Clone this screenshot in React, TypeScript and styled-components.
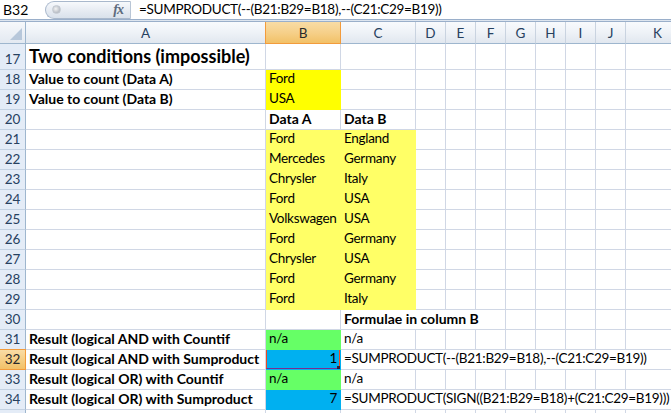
import React from "react";
import styled, { createGlobalStyle, css } from "styled-components";

const GlobalStyle = createGlobalStyle`
  html, body {
    margin: 0;
    padding: 0;
    background: #ffffff;
  }
  body {
    font-family: Lato, "Liberation Sans", sans-serif;
  }
`;

const COLS = ["A", "B", "C", "D", "E", "F", "G", "H", "I", "J", "K"];
const WIDTHS = [240, 75, 75, 30, 30, 30, 30, 30, 30, 30, 64];

const GRID = "#d0d7e5";
const YELLOW = "#ffff00";
const PALE = "#ffff66";
const GREEN = "#66ff66";
const BLUE = "#00b0f0";

type CellData = {
  t: string;
  b?: boolean;
  fill?: string;
  right?: boolean;
  span?: number;
  big?: boolean;
  selected?: boolean;
};

const pairs: [string, string][] = [
  ["Ford", "England"],
  ["Mercedes", "Germany"],
  ["Chrysler", "Italy"],
  ["Ford", "USA"],
  ["Volkswagen", "USA"],
  ["Ford", "Germany"],
  ["Chrysler", "USA"],
  ["Ford", "Germany"],
  ["Ford", "Italy"],
];

const sheet: Record<number, Record<string, CellData>> = {
  17: { A: { t: "Two conditions (impossible)", b: true, big: true } },
  18: {
    A: { t: "Value to count (Data A)", b: true },
    B: { t: "Ford", fill: YELLOW },
  },
  19: {
    A: { t: "Value to count (Data B)", b: true },
    B: { t: "USA", fill: YELLOW },
  },
  20: { B: { t: "Data A", b: true }, C: { t: "Data B", b: true } },
  30: { C: { t: "Formulae in column B", b: true, span: 4 } },
  31: {
    A: { t: "Result (logical AND with Countif", b: true },
    B: { t: "n/a", fill: GREEN },
    C: { t: "n/a" },
  },
  32: {
    A: { t: "Result (logical AND with Sumproduct", b: true },
    B: { t: "1", fill: BLUE, right: true, selected: true },
    C: { t: "=SUMPRODUCT(--(B21:B29=B18),--(C21:C29=B19))", span: 9 },
  },
  33: {
    A: { t: "Result (logical OR) with Countif", b: true },
    B: { t: "n/a", fill: GREEN },
    C: { t: "n/a" },
  },
  34: {
    A: { t: "Result (logical OR) with Sumproduct", b: true },
    B: { t: "7", fill: BLUE, right: true },
    C: { t: "=SUMPRODUCT(SIGN((B21:B29=B18)+(C21:C29=B19)))", span: 9 },
  },
};
pairs.forEach(([a, b], i) => {
  sheet[21 + i] = { B: { t: a, fill: PALE }, C: { t: b, fill: PALE } };
});

// row 35 only peeks in at the bottom edge, so its number stays hidden
const ROWS = Array.from({ length: 19 }, (_, i) => 17 + i);
const LAST_VISIBLE = 34;

const Page = styled.div`
  width: 671px;
  height: 413px;
  overflow: hidden;
  background: #ffffff;
  color: #000000;
`;

const FormulaBar = styled.div`
  display: flex;
  align-items: center;
  height: 19px;
  background: #ffffff;
  font-size: 13.5px;
  letter-spacing: -0.3px;
`;

const NameBox = styled.div`
  width: 42px;
  padding-left: 3px;
  box-sizing: border-box;
  line-height: 19px;
  letter-spacing: 0;
  font-size: 14px;
`;

const FxPill = styled.div`
  display: flex;
  align-items: center;
  justify-content: space-between;
  box-sizing: border-box;
  width: 86px;
  height: 18px;
  margin-left: 3px;
  padding: 0 7px 0 6px;
  border: 1px solid #a9b8cc;
  border-right-color: #b9c6d6;
  border-radius: 9px 0 0 9px;
  background: linear-gradient(#f7f9fc, #e6ebf2 55%, #d9e1eb);
`;

const Knob = styled.span`
  width: 7px;
  height: 7px;
  border-radius: 50%;
  background: radial-gradient(circle at 40% 40%, #f4f4f4, #b7bcc4 70%);
  border: 1px solid #c3c9d1;
`;

const Fx = styled.span`
  font-family: "Liberation Serif", serif;
  font-style: italic;
  font-weight: bold;
  font-size: 14px;
  color: #5d6b7e;
  letter-spacing: -1px;
`;

const FormulaText = styled.div`
  padding-left: 8px;
  white-space: nowrap;
  line-height: 19px;
`;

const BarRule = styled.div`
  height: 1px;
  border-top: 1px solid #9aafca;
  border-bottom: 1px solid #9aafca;
  background: #dde5ef;
`;

const Sheet = styled.div`
  display: grid;
  grid-template-columns: 26px ${WIDTHS.map((w) => `${w}px`).join(" ")};
  grid-template-rows: 22px 26px repeat(18, 20px);
  font-size: 13.5px;
`;

const Corner = styled.div`
  position: relative;
  box-sizing: border-box;
  border-right: 1px solid #9eb6ce;
  border-bottom: 1px solid #9eb6ce;
  background: linear-gradient(#f6f8fb, #e3e9f1);
  &::after {
    content: "";
    position: absolute;
    right: 3px;
    bottom: 3px;
    border-style: solid;
    border-width: 0 0 12px 12px;
    border-color: transparent transparent #b7c7da transparent;
  }
`;

const ColHeader = styled.div<{ $active?: boolean }>`
  box-sizing: border-box;
  display: flex;
  align-items: center;
  justify-content: center;
  color: #27415f;
  font-size: 13.5px;
  border-right: 1px solid #c9d3e0;
  border-bottom: 1px solid #9eb6ce;
  background: linear-gradient(#f8fafd, #eef2f7 50%, #e1e7ef);
  ${({ $active }) =>
    $active &&
    css`
      color: #2a2a2a;
      background: linear-gradient(#f9dca5, #f6d08a 50%, #f2c167);
      border-left: 1px solid #f29b3c;
      border-right: 1px solid #f29b3c;
      border-bottom: 1px solid #f29b3c;
      margin-left: -1px;
    `}
`;

const RowHeader = styled.div<{ $active?: boolean }>`
  box-sizing: border-box;
  display: flex;
  align-items: flex-end;
  justify-content: center;
  padding-bottom: 1px;
  color: #27415f;
  font-size: 13.5px;
  line-height: 18px;
  background: #e4ecf7;
  border-right: 1px solid #9eb6ce;
  border-bottom: 1px solid #c3d2e3;
  ${({ $active }) =>
    $active &&
    css`
      color: #2a2a2a;
      background: linear-gradient(#f9dca5, #f2c167);
      border-right-color: #f29b3c;
      border-bottom-color: #f29b3c;
      border-top: 1px solid #f29b3c;
      margin-top: -1px;
    `}
`;

const Cell = styled.div<{
  $fill?: string;
  $bold?: boolean;
  $right?: boolean;
  $big?: boolean;
  $span?: number;
}>`
  position: relative;
  box-sizing: border-box;
  display: flex;
  align-items: flex-end;
  justify-content: ${({ $right }) => ($right ? "flex-end" : "flex-start")};
  padding: 0 3px 2px 3px;
  overflow: hidden;
  white-space: nowrap;
  grid-column: auto / span ${({ $span }) => $span || 1};
  font-weight: ${({ $bold }) => ($bold ? 700 : 400)};
  font-size: ${({ $big, $bold }) => ($big ? "18px" : $bold ? "14px" : "inherit")};
  letter-spacing: ${({ $bold }) => ($bold ? "0" : "-0.3px")};
  line-height: ${({ $big }) => ($big ? "22px" : "17px")};
  background: ${({ $fill }) => $fill || "#ffffff"};
  border-right: 1px solid ${({ $fill }) => $fill || GRID};
  border-bottom: 1px solid ${({ $fill }) => $fill || GRID};
  ${({ $span }) =>
    $span &&
    $span > 1 &&
    css`
      overflow: visible;
    `}
`;

const Selection = styled.div`
  position: absolute;
  top: -2px;
  left: -1px;
  right: -1px;
  bottom: -1px;
  border: 2px solid #ee4a22;
  border-bottom-color: #7a2d8f;
  box-shadow: 0 0 0 1px #3b2240;
  pointer-events: none;
`;

const FillHandle = styled.span`
  position: absolute;
  right: -4px;
  bottom: -4px;
  width: 5px;
  height: 5px;
  background: #2c1d3a;
  border: 1px solid #ffffff;
  border-top: none;
  border-left: none;
`;

const SheetRow: React.FC<{ r: number }> = ({ r }) => {
  const data = sheet[r] || {};
  const out: React.ReactNode[] = [];
  let i = 0;
  while (i < COLS.length) {
    const c = COLS[i];
    const d = data[c];
    out.push(
      <Cell
        key={c}
        $fill={d?.fill}
        $bold={d?.b}
        $right={d?.right}
        $big={d?.big}
        $span={d?.span}
      >
        {d?.t}
        {d?.selected && (
          <Selection>
            <FillHandle />
          </Selection>
        )}
      </Cell>
    );
    i += d?.span || 1;
  }
  return (
    <>
      <RowHeader $active={r === 32}>{r <= LAST_VISIBLE ? r : null}</RowHeader>
      {out}
    </>
  );
};

export default function App() {
  return (
    <Page>
      <GlobalStyle />
      <FormulaBar>
        <NameBox>B32</NameBox>
        <FxPill>
          <Knob />
          <Fx>fx</Fx>
        </FxPill>
        <FormulaText>=SUMPRODUCT(--(B21:B29=B18),--(C21:C29=B19))</FormulaText>
      </FormulaBar>
      <BarRule />
      <Sheet>
        <Corner />
        {COLS.map((c) => (
          <ColHeader key={c} $active={c === "B"}>
            {c}
          </ColHeader>
        ))}
        {ROWS.map((r) => (
          <SheetRow key={r} r={r} />
        ))}
      </Sheet>
    </Page>
  );
}
